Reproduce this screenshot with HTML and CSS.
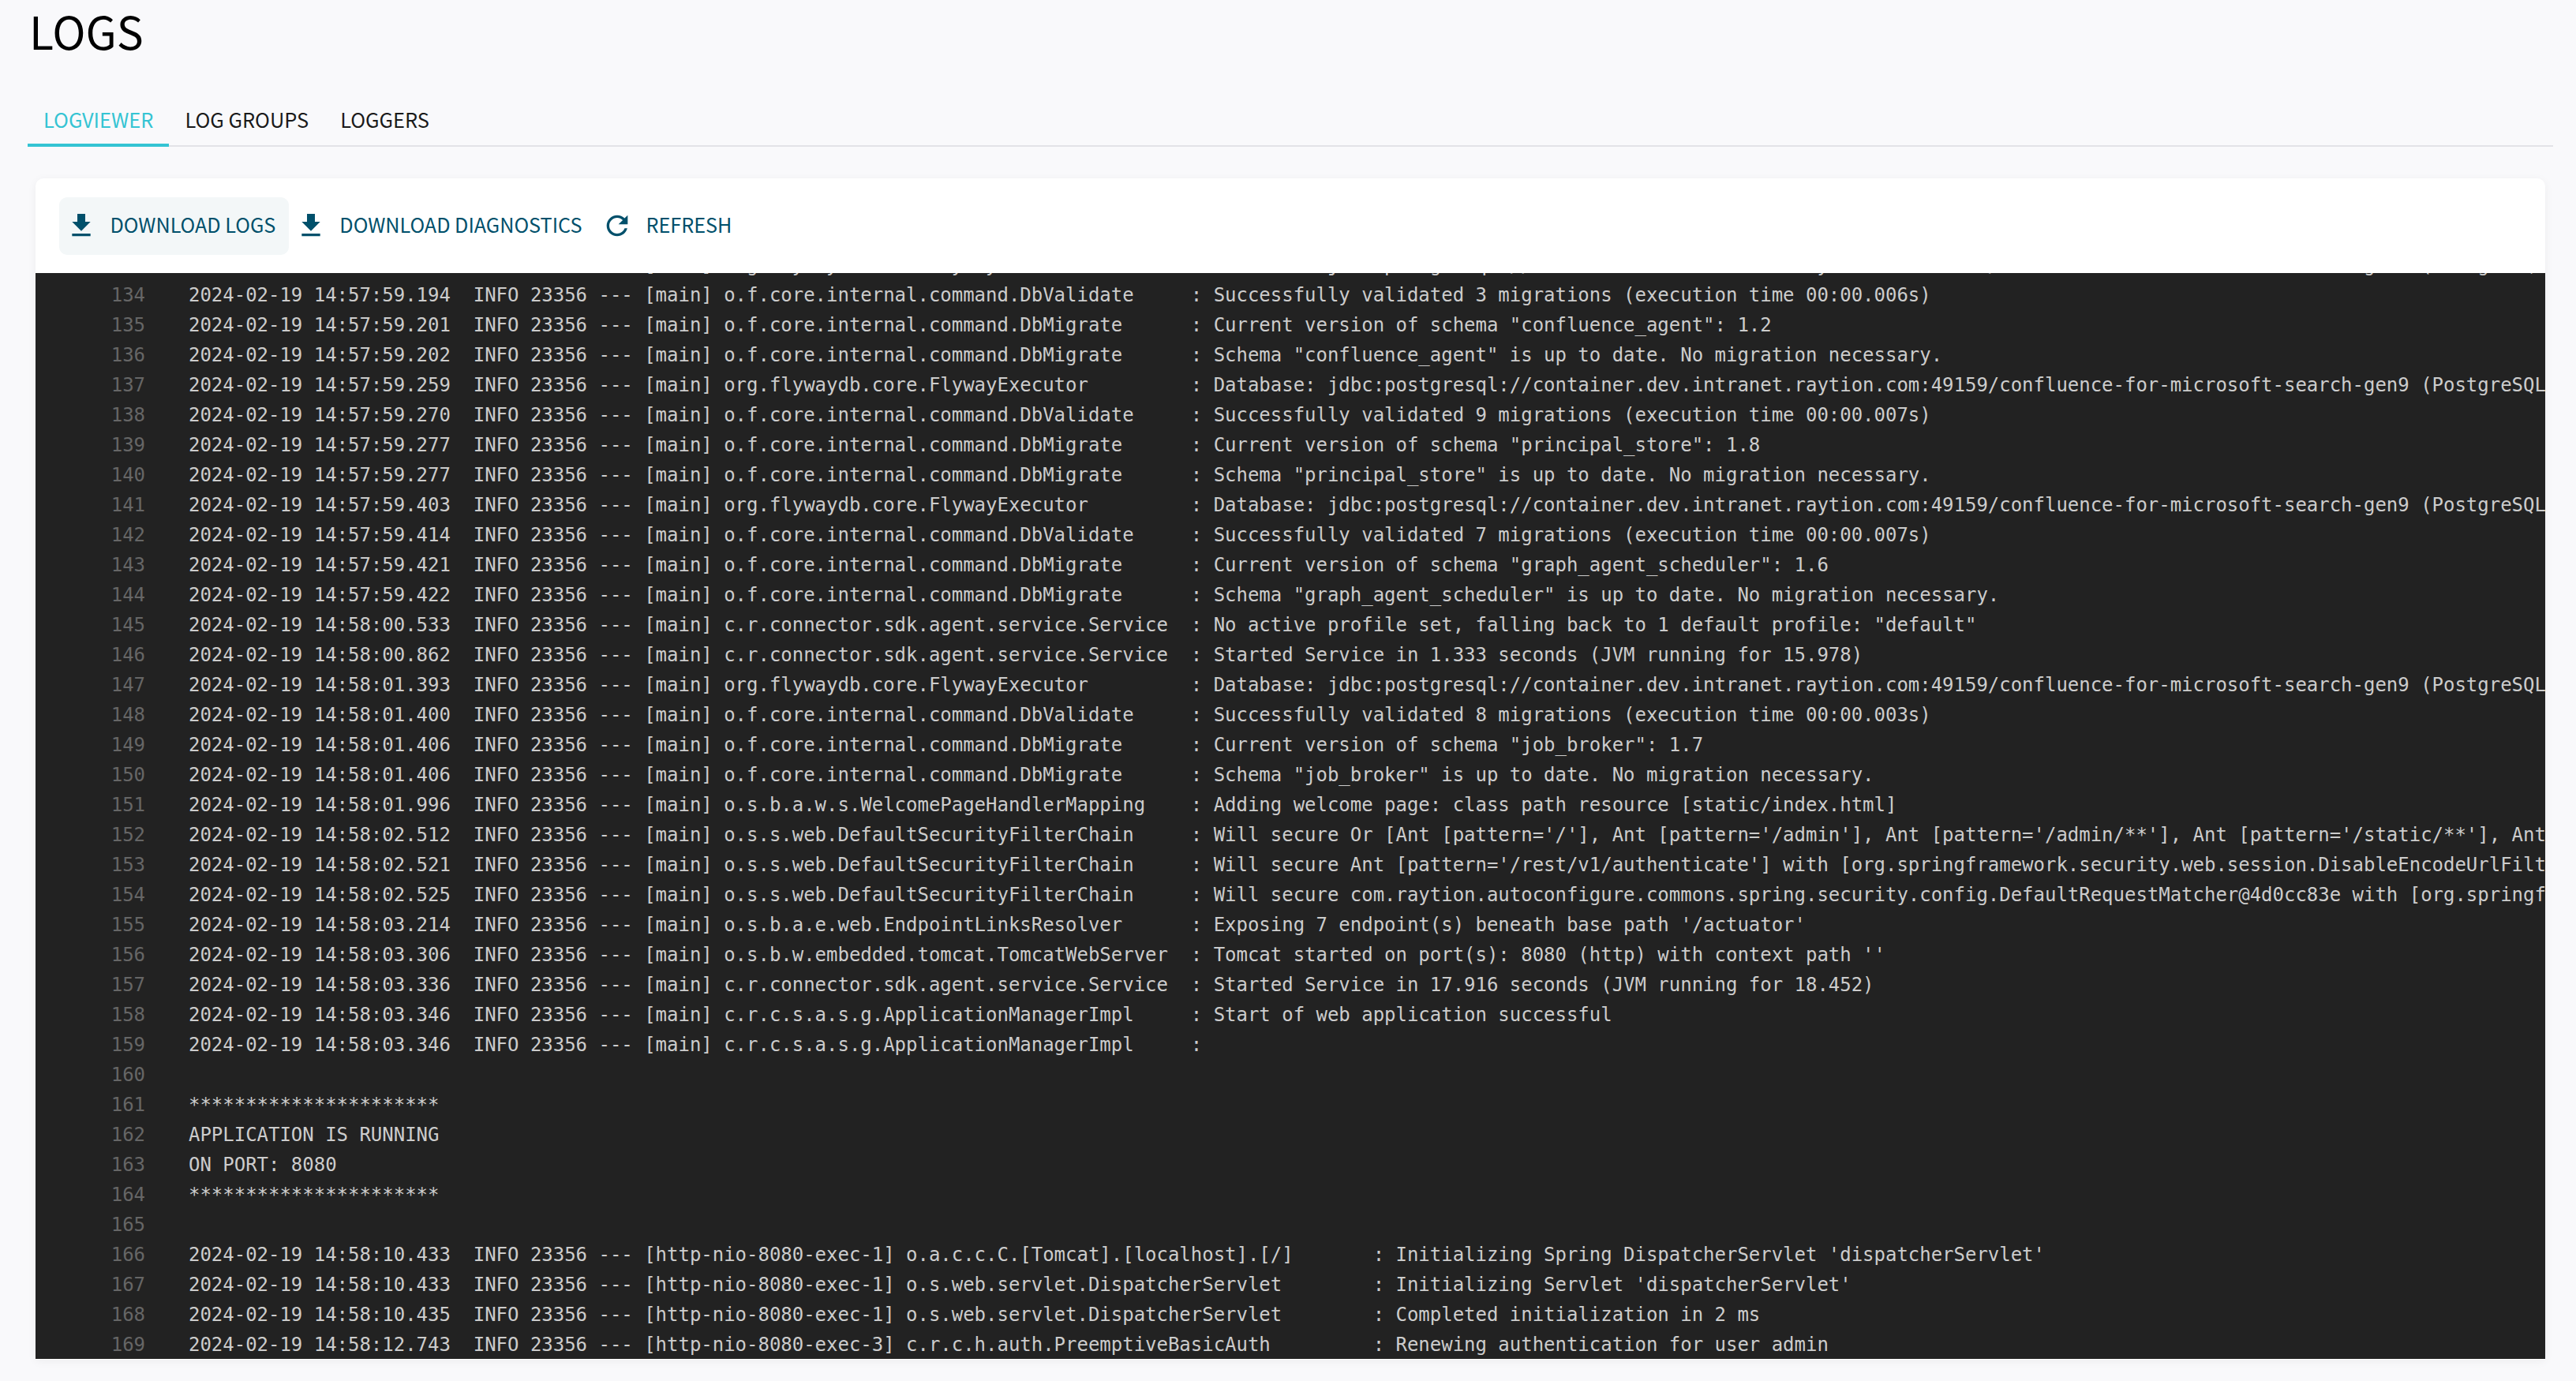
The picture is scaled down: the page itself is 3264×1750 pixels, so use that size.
FILE: index.html
```html
<!DOCTYPE html>
<html lang="en">
<head>
<meta charset="utf-8">
<title>Logs</title>
<link rel="stylesheet" href="styles.css">
</head>
<body>
<main class="page">
  <h1 class="title">LOGS</h1>
  <nav class="tabs">
    <a class="tab tab-active">LOGVIEWER</a>
    <a class="tab">LOG GROUPS</a>
    <a class="tab">LOGGERS</a>
  </nav>
  <section class="card">
    <div class="toolbar">
      <button class="btn btn-hover"><svg class="icon" viewBox="0 0 24 24"><path d="M19 9h-4V3H9v6H5l7 7 7-7zM5 18v2h14v-2H5z"/></svg><span class="btn-label">DOWNLOAD LOGS</span></button>
      <button class="btn"><svg class="icon" viewBox="0 0 24 24"><path d="M19 9h-4V3H9v6H5l7 7 7-7zM5 18v2h14v-2H5z"/></svg><span class="btn-label">DOWNLOAD DIAGNOSTICS</span></button>
      <button class="btn"><svg class="icon" viewBox="0 0 24 24"><path d="M17.65 6.35C16.2 4.9 14.21 4 12 4c-4.42 0-7.99 3.58-7.99 8s3.57 8 7.99 8c3.73 0 6.84-2.55 7.73-6h-2.08c-.82 2.33-3.04 4-5.65 4-3.31 0-6-2.69-6-6s2.69-6 6-6c1.66 0 3.14.69 4.22 1.78L13 11h7V4l-2.35 2.35z"/></svg><span class="btn-label">REFRESH</span></button>
    </div>
    <div class="log">
      <div class="lines">
<div class="row"><span class="num">133</span><span class="txt">2024-02-19 14:57:59.132  INFO 23356 --- [main] org.flywaydb.core.FlywayExecutor         : Database: jdbc:postgresql://container.dev.intranet.raytion.com:49159/confluence-for-microsoft-search-gen9 (PostgreSQL 13.4)</span></div>
<div class="row"><span class="num">134</span><span class="txt">2024-02-19 14:57:59.194  INFO 23356 --- [main] o.f.core.internal.command.DbValidate     : Successfully validated 3 migrations (execution time 00:00.006s)</span></div>
<div class="row"><span class="num">135</span><span class="txt">2024-02-19 14:57:59.201  INFO 23356 --- [main] o.f.core.internal.command.DbMigrate      : Current version of schema "confluence_agent": 1.2</span></div>
<div class="row"><span class="num">136</span><span class="txt">2024-02-19 14:57:59.202  INFO 23356 --- [main] o.f.core.internal.command.DbMigrate      : Schema "confluence_agent" is up to date. No migration necessary.</span></div>
<div class="row"><span class="num">137</span><span class="txt">2024-02-19 14:57:59.259  INFO 23356 --- [main] org.flywaydb.core.FlywayExecutor         : Database: jdbc:postgresql://container.dev.intranet.raytion.com:49159/confluence-for-microsoft-search-gen9 (PostgreSQL 13.4)</span></div>
<div class="row"><span class="num">138</span><span class="txt">2024-02-19 14:57:59.270  INFO 23356 --- [main] o.f.core.internal.command.DbValidate     : Successfully validated 9 migrations (execution time 00:00.007s)</span></div>
<div class="row"><span class="num">139</span><span class="txt">2024-02-19 14:57:59.277  INFO 23356 --- [main] o.f.core.internal.command.DbMigrate      : Current version of schema "principal_store": 1.8</span></div>
<div class="row"><span class="num">140</span><span class="txt">2024-02-19 14:57:59.277  INFO 23356 --- [main] o.f.core.internal.command.DbMigrate      : Schema "principal_store" is up to date. No migration necessary.</span></div>
<div class="row"><span class="num">141</span><span class="txt">2024-02-19 14:57:59.403  INFO 23356 --- [main] org.flywaydb.core.FlywayExecutor         : Database: jdbc:postgresql://container.dev.intranet.raytion.com:49159/confluence-for-microsoft-search-gen9 (PostgreSQL 13.4)</span></div>
<div class="row"><span class="num">142</span><span class="txt">2024-02-19 14:57:59.414  INFO 23356 --- [main] o.f.core.internal.command.DbValidate     : Successfully validated 7 migrations (execution time 00:00.007s)</span></div>
<div class="row"><span class="num">143</span><span class="txt">2024-02-19 14:57:59.421  INFO 23356 --- [main] o.f.core.internal.command.DbMigrate      : Current version of schema "graph_agent_scheduler": 1.6</span></div>
<div class="row"><span class="num">144</span><span class="txt">2024-02-19 14:57:59.422  INFO 23356 --- [main] o.f.core.internal.command.DbMigrate      : Schema "graph_agent_scheduler" is up to date. No migration necessary.</span></div>
<div class="row"><span class="num">145</span><span class="txt">2024-02-19 14:58:00.533  INFO 23356 --- [main] c.r.connector.sdk.agent.service.Service  : No active profile set, falling back to 1 default profile: "default"</span></div>
<div class="row"><span class="num">146</span><span class="txt">2024-02-19 14:58:00.862  INFO 23356 --- [main] c.r.connector.sdk.agent.service.Service  : Started Service in 1.333 seconds (JVM running for 15.978)</span></div>
<div class="row"><span class="num">147</span><span class="txt">2024-02-19 14:58:01.393  INFO 23356 --- [main] org.flywaydb.core.FlywayExecutor         : Database: jdbc:postgresql://container.dev.intranet.raytion.com:49159/confluence-for-microsoft-search-gen9 (PostgreSQL 13.4)</span></div>
<div class="row"><span class="num">148</span><span class="txt">2024-02-19 14:58:01.400  INFO 23356 --- [main] o.f.core.internal.command.DbValidate     : Successfully validated 8 migrations (execution time 00:00.003s)</span></div>
<div class="row"><span class="num">149</span><span class="txt">2024-02-19 14:58:01.406  INFO 23356 --- [main] o.f.core.internal.command.DbMigrate      : Current version of schema "job_broker": 1.7</span></div>
<div class="row"><span class="num">150</span><span class="txt">2024-02-19 14:58:01.406  INFO 23356 --- [main] o.f.core.internal.command.DbMigrate      : Schema "job_broker" is up to date. No migration necessary.</span></div>
<div class="row"><span class="num">151</span><span class="txt">2024-02-19 14:58:01.996  INFO 23356 --- [main] o.s.b.a.w.s.WelcomePageHandlerMapping    : Adding welcome page: class path resource [static/index.html]</span></div>
<div class="row"><span class="num">152</span><span class="txt">2024-02-19 14:58:02.512  INFO 23356 --- [main] o.s.s.web.DefaultSecurityFilterChain     : Will secure Or [Ant [pattern='/'], Ant [pattern='/admin'], Ant [pattern='/admin/**'], Ant [pattern='/static/**'], Ant [pattern='/rest/**']]</span></div>
<div class="row"><span class="num">153</span><span class="txt">2024-02-19 14:58:02.521  INFO 23356 --- [main] o.s.s.web.DefaultSecurityFilterChain     : Will secure Ant [pattern='/rest/v1/authenticate'] with [org.springframework.security.web.session.DisableEncodeUrlFilter]</span></div>
<div class="row"><span class="num">154</span><span class="txt">2024-02-19 14:58:02.525  INFO 23356 --- [main] o.s.s.web.DefaultSecurityFilterChain     : Will secure com.raytion.autoconfigure.commons.spring.security.config.DefaultRequestMatcher@4d0cc83e with [org.springframework.security.web]</span></div>
<div class="row"><span class="num">155</span><span class="txt">2024-02-19 14:58:03.214  INFO 23356 --- [main] o.s.b.a.e.web.EndpointLinksResolver      : Exposing 7 endpoint(s) beneath base path '/actuator'</span></div>
<div class="row"><span class="num">156</span><span class="txt">2024-02-19 14:58:03.306  INFO 23356 --- [main] o.s.b.w.embedded.tomcat.TomcatWebServer  : Tomcat started on port(s): 8080 (http) with context path ''</span></div>
<div class="row"><span class="num">157</span><span class="txt">2024-02-19 14:58:03.336  INFO 23356 --- [main] c.r.connector.sdk.agent.service.Service  : Started Service in 17.916 seconds (JVM running for 18.452)</span></div>
<div class="row"><span class="num">158</span><span class="txt">2024-02-19 14:58:03.346  INFO 23356 --- [main] c.r.c.s.a.s.g.ApplicationManagerImpl     : Start of web application successful</span></div>
<div class="row"><span class="num">159</span><span class="txt">2024-02-19 14:58:03.346  INFO 23356 --- [main] c.r.c.s.a.s.g.ApplicationManagerImpl     : </span></div>
<div class="row"><span class="num">160</span><span class="txt"></span></div>
<div class="row"><span class="num">161</span><span class="txt">**********************</span></div>
<div class="row"><span class="num">162</span><span class="txt">APPLICATION IS RUNNING</span></div>
<div class="row"><span class="num">163</span><span class="txt">ON PORT: 8080</span></div>
<div class="row"><span class="num">164</span><span class="txt">**********************</span></div>
<div class="row"><span class="num">165</span><span class="txt"></span></div>
<div class="row"><span class="num">166</span><span class="txt">2024-02-19 14:58:10.433  INFO 23356 --- [http-nio-8080-exec-1] o.a.c.c.C.[Tomcat].[localhost].[/]       : Initializing Spring DispatcherServlet 'dispatcherServlet'</span></div>
<div class="row"><span class="num">167</span><span class="txt">2024-02-19 14:58:10.433  INFO 23356 --- [http-nio-8080-exec-1] o.s.web.servlet.DispatcherServlet        : Initializing Servlet 'dispatcherServlet'</span></div>
<div class="row"><span class="num">168</span><span class="txt">2024-02-19 14:58:10.435  INFO 23356 --- [http-nio-8080-exec-1] o.s.web.servlet.DispatcherServlet        : Completed initialization in 2 ms</span></div>
<div class="row"><span class="num">169</span><span class="txt">2024-02-19 14:58:12.743  INFO 23356 --- [http-nio-8080-exec-3] c.r.c.h.auth.PreemptiveBasicAuth         : Renewing authentication for user admin</span></div>
      </div>
    </div>
  </section>
</main>
</body>
</html>
```

FILE: styles.css
```css
* { box-sizing: border-box; }
html, body { margin: 0; height: 100%; }
body {
  background: #f9f9fb;
  color: #000;
  font-family: "Noto Sans CJK JP", "Noto Sans", sans-serif;
  overflow: hidden;
}
.page {
  height: 1750px;
  display: flex;
  flex-direction: column;
  padding: 0 29px 27px 35px;
}
.title {
  margin: 0 0 0 2px;
  height: 82px;
  font-size: 57px;
  font-weight: 400;
  line-height: 77px;
}
.tabs {
  display: flex;
  height: 104px;
  padding-top: 47px;
  border-bottom: 2px solid #e3e3e7;
}
.tab {
  height: 57px;
  margin-bottom: -2px;
  padding: 0 20px;
  font-size: 25.4px;
  line-height: 44px;
  color: #1a1a1a;
}
.tab-active {
  color: #35c4d3;
  border-bottom: 4px solid #35c4d3;
}
.card {
  flex: 1;
  min-height: 0;
  display: flex;
  flex-direction: column;
  margin: 40px 10px 0 10px;
  padding-bottom: 1px;
  background: #fff;
  border-radius: 10px 10px 0 0;
  box-shadow: 0 2px 12px rgba(0, 0, 0, 0.05);
}
.toolbar {
  height: 120px;
  flex: none;
  display: flex;
  align-items: center;
  padding: 0 30px;
}
.btn {
  display: flex;
  align-items: center;
  gap: 16.5px;
  height: 73px;
  padding: 0 16.5px 0 8px;
  border: 0;
  border-radius: 10px;
  background: none;
  color: #00506b;
  font: 400 25.2px "Noto Sans CJK JP", "Noto Sans", sans-serif;
}
.btn-label { padding-bottom: 4px; }
.btn-hover { background: #f3f7f8; }
.icon {
  width: 40px;
  height: 40px;
  flex: none;
  fill: #00506b;
}
.log {
  flex: 1;
  min-height: 0;
  overflow: hidden;
  background: #222;
  font: 24px/38px "DejaVu Sans Mono", monospace;
  letter-spacing: -0.02px;
}
.lines { margin-top: -29px; }
.row {
  display: flex;
  height: 38px;
  white-space: pre;
}
.num {
  flex: none;
  width: 139px;
  text-align: right;
  color: #666;
}
.txt {
  margin-left: 55px;
  color: #ccc;
}
```
